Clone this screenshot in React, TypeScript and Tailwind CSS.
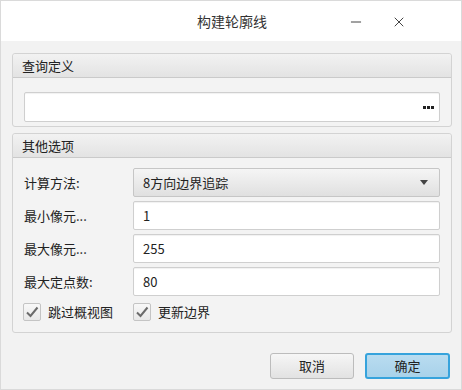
import { Minus, X } from 'lucide-react'

const font = { fontFamily: '"Noto Sans CJK SC", "Noto Sans", sans-serif' }

function PanelHeader({ title }: { title: string }) {
    return (
        <div className="h-6 flex items-center px-[9px] bg-gradient-to-b from-[#f2f2f2] to-[#e3e3e3] border-b border-[#cacaca] rounded-t-[3px] text-[13px] text-[#222]">
            {title}
        </div>
    )
}

function Field({ value }: { value: string }) {
    return (
        <div className="h-[29px] flex items-center px-[9px] bg-white border border-[#cfcfcf] rounded-[2px] text-[13px] text-[#222] shadow-[inset_0_1px_1px_rgba(0,0,0,0.06)]">
            {value}
        </div>
    )
}

function Checkbox({ label }: { label: string }) {
    return (
        <div className="flex items-center gap-[7px]">
            <div className="w-[18px] h-[18px] border border-[#c4c4c4] rounded-[2px] bg-gradient-to-b from-[#f8f8f8] to-[#e8e8e8] flex items-center justify-center">
                <svg width="14" height="14" viewBox="0 0 14 14">
                    <path d="M2 7.5L5.5 11L12.5 2.5" fill="none" stroke="#6b6b6b" strokeWidth="2" />
                </svg>
            </div>
            <span className="text-[13px] text-[#222]">{label}</span>
        </div>
    )
}

export default function App() {
    const rows = [
        { label: '最小像元...', value: '1' },
        { label: '最大像元...', value: '255' },
        { label: '最大定点数:', value: '80' },
    ]

    return (
        <div style={font} className="w-[462px] h-[390px] flex flex-col border border-[#dadada] bg-[#f2f2f2]">
            {/* Title bar */}
            <div className="h-10 bg-white flex items-center relative">
                <div className="flex-1 text-center text-[14px] text-[#333] pl-[2px]">构建轮廓线</div>
                <Minus className="absolute left-[347px] top-[13px] w-4 h-4 text-[#444]" strokeWidth={1.5} />
                <X className="absolute left-[390px] top-[13px] w-4 h-4 text-[#444]" strokeWidth={1.5} />
            </div>

            {/* Content */}
            <div className="flex flex-col pt-3 pl-[11px] pr-[9px] gap-[6px]">
                <div className="border border-[#d3d3d3] rounded-[3px] bg-[#f3f3f3] pb-[4px]">
                    <PanelHeader title="查询定义" />
                    <div className="pt-[14px] pl-[11px] pr-[11px]">
                        <div className="h-[30px] flex items-center justify-end pr-[5px] bg-white border border-[#cfcfcf] rounded-[2px] shadow-[inset_0_1px_1px_rgba(0,0,0,0.06)]">
                            <svg width="11" height="3" viewBox="0 0 11 3">
                                <rect x="0" y="0" width="3" height="3" fill="#222" />
                                <rect x="4" y="0" width="3" height="3" fill="#222" />
                                <rect x="8" y="0" width="3" height="3" fill="#222" />
                            </svg>
                        </div>
                    </div>
                </div>

                <div className="border border-[#d3d3d3] rounded-[3px] bg-[#f3f3f3] h-[200px]">
                    <PanelHeader title="其他选项" />
                    <div className="pt-[10px] pl-[11px] pr-[11px] flex flex-col gap-[4px]">
                        <div className="flex items-center">
                            <span className="w-[109px] text-[13px] text-[#222]">计算方法:</span>
                            <div className="flex-1 h-[29px] flex items-center justify-between px-[9px] bg-gradient-to-b from-[#f5f5f5] to-[#e0e0e0] border border-[#c6c6c6] rounded-[2px] text-[13px] text-[#222]">
                                <span>8方向边界追踪</span>
                                <svg width="8" height="5" viewBox="0 0 8 5" className="mr-[2px]">
                                    <path d="M0 0h8L4 5z" fill="#444" />
                                </svg>
                            </div>
                        </div>
                        {rows.map((r) => (
                            <div key={r.label} className="flex items-center">
                                <span className="w-[109px] text-[13px] text-[#222]">{r.label}</span>
                                <div className="flex-1">
                                    <Field value={r.value} />
                                </div>
                            </div>
                        ))}
                        <div className="flex items-center pt-[2px] -ml-[1px]">
                            <div className="w-[110px]">
                                <Checkbox label="跳过概视图" />
                            </div>
                            <Checkbox label="更新边界" />
                        </div>
                    </div>
                </div>
            </div>

            {/* Buttons */}
            <div className="flex justify-end gap-[11px] pr-[11px] pt-[20px]">
                <button className="w-[84px] h-[26px] bg-gradient-to-b from-[#f6f6f6] to-[#e2e2e2] border border-[#bcbcbc] rounded-[3px] text-[13px] text-[#222]">
                    取消
                </button>
                <button className="w-[85px] h-[26px] bg-gradient-to-b from-[#b9dcf0] to-[#a8d2ea] border-2 border-[#36a3dc] rounded-[3px] text-[13px] text-[#222]">
                    确定
                </button>
            </div>
        </div>
    )
}
